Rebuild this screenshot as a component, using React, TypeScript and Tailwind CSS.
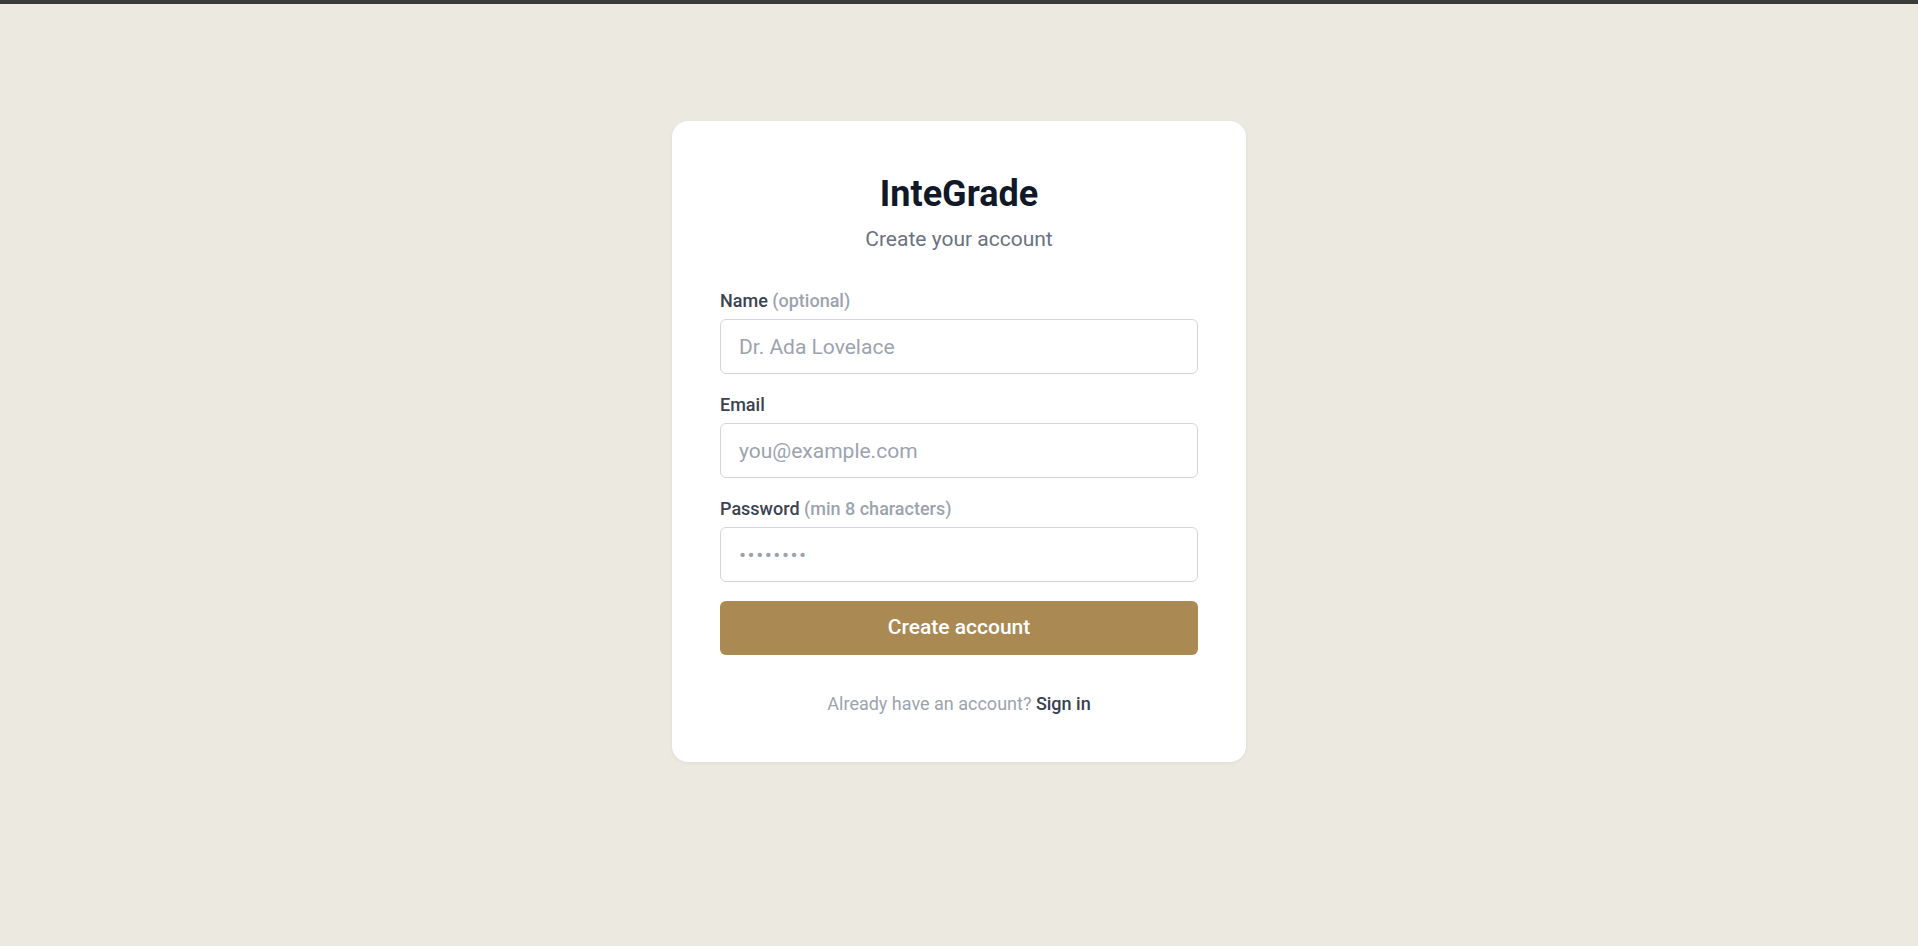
import React, { useState } from "react";

const font = { fontFamily: "Roboto, 'Noto Sans', Arial, sans-serif" };

interface FieldProps {
  label: string;
  hint?: string;
  type: string;
  placeholder: string;
  value: string;
  onChange: (v: string) => void;
  extra?: string;
}

const Field: React.FC<FieldProps> = ({ label, hint, type, placeholder, value, onChange, extra = "" }) => (
  <div className="flex flex-col">
    <label className="mb-1.5 text-lg leading-6 font-medium text-[#3b4250]">
      {label}
      {hint && <span className="text-[#9ca3af]"> {hint}</span>}
    </label>
    <input
      type={type}
      placeholder={placeholder}
      value={value}
      onChange={(e) => onChange(e.target.value)}
      className={`h-[55px] w-full rounded-md border border-[#d1d5db] bg-white px-[18px] text-[21px] text-[#111827] placeholder:text-[#9ca3af] outline-none ${extra}`}
    />
  </div>
);

export default function App() {
  const [name, setName] = useState("");
  const [email, setEmail] = useState("");
  const [password, setPassword] = useState("");

  const handleSubmit = (event: React.FormEvent<HTMLFormElement>) => {
    event.preventDefault();
  };

  return (
    <div className="min-h-screen bg-[#ece9e1]" style={font}>
      <div className="h-1 bg-[#3a3b3b]" />
      <div className="flex justify-center pt-[117px]">
        <div className="w-[574px] rounded-2xl bg-white px-12 pt-[53px] pb-[44px] shadow-[0_1px_4px_rgba(0,0,0,0.06)]">
          <h1 className="text-center text-4xl leading-10 font-bold text-[#111827]">InteGrade</h1>
          <p className="mt-[11px] text-center text-[21px] leading-7 text-[#6b7280]">Create your account</p>

          <form onSubmit={handleSubmit} className="mt-9 flex flex-col gap-[19px]">
            <Field
              label="Name"
              hint="(optional)"
              type="text"
              placeholder="Dr. Ada Lovelace"
              value={name}
              onChange={setName}
            />
            <Field
              label="Email"
              type="email"
              placeholder="you@example.com"
              value={email}
              onChange={setEmail}
            />
            <Field
              label="Password"
              hint="(min 8 characters)"
              type="password"
              placeholder="••••••••"
              value={password}
              onChange={setPassword}
              extra="placeholder:tracking-[1.5px]"
            />
            <button
              type="submit"
              className="h-[54px] w-full rounded-md bg-[#aa8953] text-[21px] font-medium text-white"
            >
              Create account
            </button>
          </form>

          <p className="mt-[35px] text-center text-lg leading-7 text-[#9ca3af]">
            Already have an account?{" "}
            <a href="#" className="font-medium text-[#374151]">
              Sign in
            </a>
          </p>
        </div>
      </div>
    </div>
  );
}
